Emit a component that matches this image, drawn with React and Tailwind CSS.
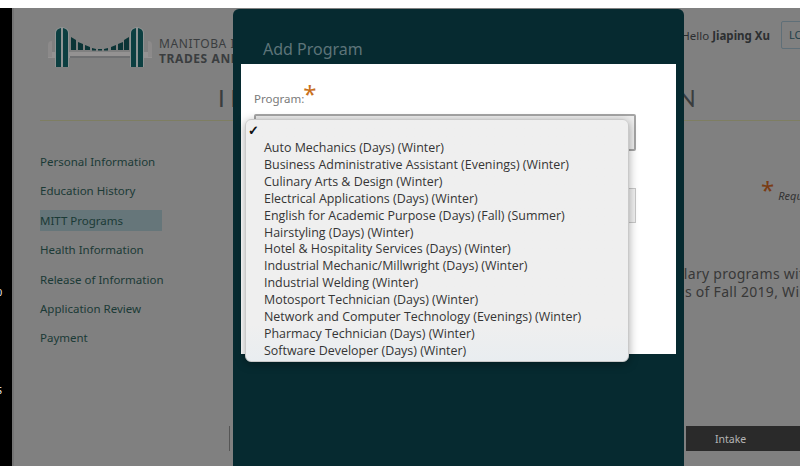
const navItems = [
  "Personal Information",
  "Education History",
  "MITT Programs",
  "Health Information",
  "Release of Information",
  "Application Review",
  "Payment",
]

const programs = [
  "Auto Mechanics (Days) (Winter)",
  "Business Administrative Assistant (Evenings) (Winter)",
  "Culinary Arts & Design (Winter)",
  "Electrical Applications (Days) (Winter)",
  "English for Academic Purpose (Days) (Fall) (Summer)",
  "Hairstyling (Days) (Winter)",
  "Hotel & Hospitality Services (Days) (Winter)",
  "Industrial Mechanic/Millwright (Days) (Winter)",
  "Industrial Welding (Winter)",
  "Motosport Technician (Days) (Winter)",
  "Network and Computer Technology (Evenings) (Winter)",
  "Pharmacy Technician (Days) (Winter)",
  "Software Developer (Days) (Winter)",
]

const BridgeLogo = () => (
  <svg width="104" height="42" viewBox="0 0 104 42" className="shrink-0">
    <rect x="0" y="25" width="104" height="6" fill="#949292" />
    <path d="M0 30V18Q0 14 4 14V30Z" fill="#8c8a8a" />
    <path d="M104 30V18Q104 14 100 14V30Z" fill="#8c8a8a" />
    <rect x="22" y="29" width="60" height="2" fill="#6f7072" />
    <path d="M7 40V6Q7 1 14 0Q21 1 21 6V40Z" fill="#8f9494" />
    <path d="M82 40V6Q82 1 89 0Q96 1 96 6V40Z" fill="#8f9494" />
    <path d="M8 40V6Q8 2 13 1V40Z" fill="#0c3f41" />
    <path d="M15 40V1Q20 2 20 6V40Z" fill="#0c3f41" />
    <path d="M83 40V6Q83 2 88 1V40Z" fill="#0c3f41" />
    <path d="M90 40V1Q95 2 95 6V40Z" fill="#0c3f41" />
    <path d="M23 10L28 13V23H23Z" fill="#0b3436" />
    <path d="M30 15L35 17V23H30Z" fill="#0b3436" />
    <path d="M37 18L42 20V23H37Z" fill="#0b3436" />
    <path d="M44 21L48 22V23.500H44Z" fill="#0b3436" />
    <path d="M50 22H54V23.500H50Z" fill="#0b3436" />
    <path d="M56 22L60 21V23.500H56Z" fill="#0b3436" />
    <path d="M63 20L68 18V23H63Z" fill="#0b3436" />
    <path d="M70 17L75 15V23H70Z" fill="#0b3436" />
    <path d="M76 13L81 10V23H76Z" fill="#0b3436" />
  </svg>
)

const Header = () => (
  <div className="flex items-start h-[62px] pl-[34px]">
    <div className="mt-[19px]">
      <BridgeLogo />
    </div>
    <div className="ml-[7px] mt-[28px] leading-[15px] text-[#3a3d3f] whitespace-nowrap">
      <p className="text-[12px] tracking-[0.6px]">MANITOBA INSTITUTE OF</p>
      <p className="text-[12px] font-bold tracking-[0.6px]">TRADES AND TECHNOLOGY</p>
    </div>
    <div className="ml-auto mt-[13px] mr-[-21px] flex items-center gap-[11px] whitespace-nowrap">
      <p className="pt-[2px] text-[11.500px] text-[#2c2f31]">Hello <span className="font-bold">Jiaping Xu</span></p>
      <div className="w-[40px] h-[28px] border border-[#5f6f78] rounded-[2px] pl-[7px] text-[11px] leading-[26px] text-[#1f3f4a] shrink-0">LOGOUT</div>
    </div>
  </div>
)

const Sidebar = () => (
  <div className="w-[190px] shrink-0 pt-[30px]">
    {navItems.map((item) => (
      <div
        key={item}
        className={
          "h-[21px] mb-[8.400px] w-[122px] text-[11.500px] leading-[21px] whitespace-nowrap text-[#1b3a36] " +
          (item === "MITT Programs" ? "bg-[#66767a]" : "")
        }
      >
        {item}
      </div>
    ))}
  </div>
)

const PageBehind = () => (
  <div className="w-[788px] h-full shrink-0 overflow-hidden border-l-2 border-[#747474]">
    <Header />
    <h1 className="h-[50px] pl-[204px] text-[24px] leading-[56px] tracking-[5.500px] font-normal font-['Lato',sans-serif] text-[#3a3d3f] whitespace-nowrap">
      INTERNATIONAL APPLICATION
    </h1>
    <div className="ml-[26px] h-px bg-[#7e7e62]" />
    <div className="flex pl-[26px]">
      <Sidebar />
      <div className="flex-1 min-w-0">
        <div className="flex items-start pt-[59px] pl-[531px] whitespace-nowrap">
          <span className="text-[24px] leading-[20px] text-[#7a3c14]">*</span>
          <span className="ml-[4px] mt-[8px] text-[11px] italic text-[#333]">Required</span>
        </div>
        <div className="mt-[60px] pl-[422px] text-[14px] leading-[18px] tracking-[0.280px] text-[#383838] whitespace-nowrap">
          <p>ancillary programs with</p>
          <p>terms of Fall 2019, Winter</p>
        </div>
        <div className="mt-[125px] flex items-stretch h-[25px]">
          <div className="w-px ml-[-1px] bg-[#555]" />
          <div className="ml-[456px] w-[114px] bg-[#2a2a2a] pl-[29px] text-[10.500px] leading-[26px] text-[#b5b5b5]">
            Intake
          </div>
        </div>
      </div>
    </div>
  </div>
)

const ProgramDropdown = () => (
  <div className="absolute left-[4px] top-[55px] w-[384px] h-[243px] rounded-[6px] border border-[#c9c9c9] bg-gradient-to-b from-[#efefef] via-[#efefef] via-[85%] to-[#e9edf0] pt-[2px] text-[12.450px] leading-[17px] text-[#353535] shadow-[0_2px_10px_rgba(0,0,0,0.35)] font-['Open_Sans',sans-serif]">
    <div className="h-[17px] pl-[2px] text-[13px] leading-[16px] font-bold text-[#111]">✓</div>
    {programs.map((p) => (
      <div key={p} className="h-[16.920px] pl-[18px] whitespace-nowrap">{p}</div>
    ))}
  </div>
)

const Modal = () => (
  <div className="absolute left-[233px] top-[9px] w-[451px] h-[470px] rounded-[6px] bg-[#062a30] px-[8px]">
    <h2 className="h-[55px] pl-[22px] text-[16px] leading-[81px] text-[#5d7479]">Add Program</h2>
    <div className="relative h-[290px] w-[435px] bg-white px-[13px] pt-[18px]">
      <div className="flex h-[32px] items-start">
        <span className="pt-[9px] text-[11.500px] leading-[16px] text-[#7a7a7a]">Program:</span>
        <span className="ml-[-1px] text-[24px] leading-[24px] text-[#c9711e]">*</span>
      </div>
      <div className="w-[382px] h-[37px] border-2 border-[#a5a5a5] rounded-[2px] bg-[#eeeeee]" />
      <div className="mt-[37px] w-[382px] h-[35px] border border-[#c8c8c8] bg-[#f0f0f0]" />
      <ProgramDropdown />
    </div>
  </div>
)

export default function App() {
  return (
    <div className="relative w-[800px] h-[466px] overflow-hidden bg-white font-['Noto_Sans',sans-serif]">
      <div className="h-[8px] bg-white" />
      <div className="flex h-[458px]">
        <div className="w-[12px] shrink-0 bg-black text-white text-[9px] leading-none overflow-hidden">
          <p className="mt-[86px] -ml-[3px]">J</p>
          <p className="mt-[185px] -ml-[3px]">0</p>
          <p className="mt-[89px] -ml-[3px]">S</p>
        </div>
        <div className="flex-1 bg-[#808080]">
          <PageBehind />
        </div>
      </div>
      <Modal />
    </div>
  )
}
